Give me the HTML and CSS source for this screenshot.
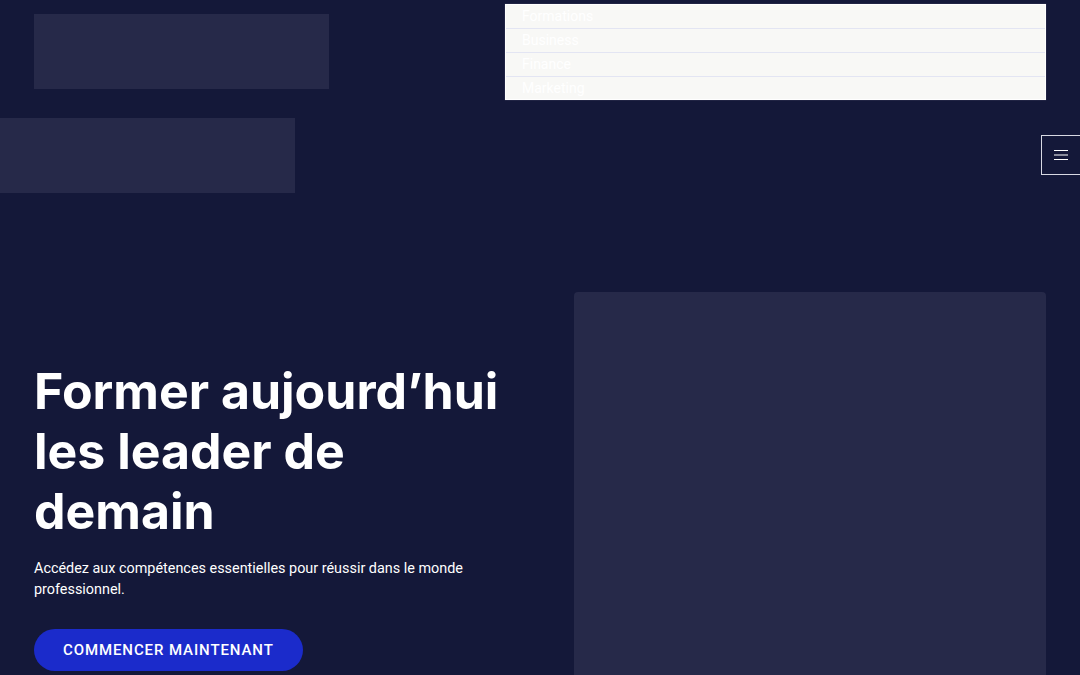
FILE: index.html
```html
<!DOCTYPE html>
<html lang="fr">
<head>
<meta charset="utf-8">
<title>Formations</title>
<link rel="stylesheet" href="styles.css">
</head>
<body>
<div class="page">
  <header class="top">
    <div class="logo-box"></div>
    <ul class="menu">
      <li>Formations</li>
      <li>Business</li>
      <li>Finance</li>
      <li>Marketing</li>
    </ul>
  </header>
  <div class="row2">
    <div class="side-box"></div>
    <button class="burger" aria-label="Menu">
      <svg width="14" height="10" viewBox="0 0 14 10"><path d="M0 0.5H14M0 5H14M0 9.5H14" stroke="#ffffff" stroke-width="1.2" fill="none"/></svg>
    </button>
  </div>
  <section class="hero">
    <div class="hero-text">
      <h1 class="title">Former aujourd’hui les leader de demain</h1>
      <p class="lead">Accédez aux compétences essentielles pour réussir dans le monde professionnel.</p>
      <a class="cta" href="#">COMMENCER MAINTENANT</a>
    </div>
    <div class="hero-card"></div>
  </section>
</div>
</body>
</html>
```
FILE: styles.css
```css
html, body {
  margin: 0;
  padding: 0;
}
body {
  background: #141839;
  color: #ffffff;
  font-family: Roboto, "Liberation Sans", sans-serif;
  overflow: hidden;
  height: 675px;
}
.page {
  padding: 0 34px;
}
.top {
  display: flex;
  justify-content: space-between;
  align-items: flex-start;
}
.logo-box {
  margin-top: 14px;
  width: 295px;
  height: 75px;
  background: #262949;
}
.menu {
  list-style: none;
  margin: 4px 0 0;
  padding: 0;
  width: 539px;
  background: #f8f8f6;
  border: 1px solid #ffffff;
  box-shadow: 0 0 1px 0 rgba(120, 120, 140, 0.8);
}
.menu li {
  height: 23px;
  line-height: 23px;
  padding-left: 16px;
  font-size: 14px;
  color: #ffffff;
  border-bottom: 1px solid #e3e5f3;
}
.menu li:last-child {
  border-bottom: none;
  height: 22px;
}
.row2 {
  display: flex;
  justify-content: space-between;
  align-items: flex-start;
  margin-top: 18px;
}
.side-box {
  margin-left: -34px;
  width: 295px;
  height: 75px;
  background: #262949;
}
.burger {
  margin-top: 17px;
  margin-right: -35px;
  width: 40px;
  height: 40px;
  padding: 0;
  background: transparent;
  border: 1px solid #d8d9e3;
  display: flex;
  align-items: center;
  justify-content: center;
}
.burger svg {
  display: block;
}
.hero {
  display: grid;
  grid-template-columns: 506px 472px;
  column-gap: 34px;
  margin-top: 99px;
}
.hero-text {
  padding-top: 69px;
}
.title {
  margin: 0;
  max-width: 475px;
  font-family: Inter, "Noto Sans", sans-serif;
  font-weight: 700;
  font-size: 50px;
  line-height: 60px;
  color: #ffffff;
}
.lead {
  margin: 17px 0 0;
  max-width: 470px;
  font-size: 14.4px;
  line-height: 21px;
  color: #ffffff;
}
.cta {
  display: inline-block;
  margin-top: 29px;
  height: 42px;
  line-height: 42px;
  padding: 0 29px;
  border-radius: 21px;
  background: #1b2bcb;
  color: #ffffff;
  font-size: 15px;
  font-weight: 500;
  letter-spacing: 0.9px;
  text-decoration: none;
}
.hero-card {
  height: 420px;
  background: #262949;
  border-radius: 4px;
}
```
